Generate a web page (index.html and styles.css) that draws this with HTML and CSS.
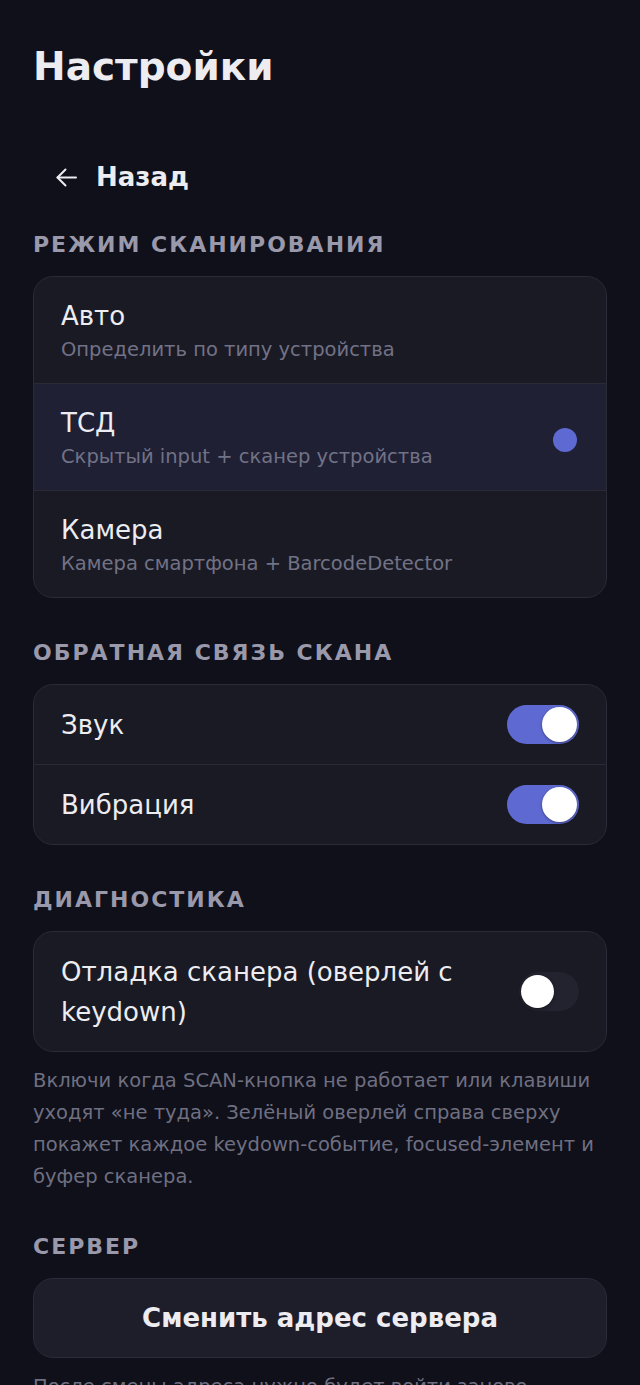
FILE: index.html
```html
<!DOCTYPE html>
<html lang="ru">

<head>
    <meta charset="UTF-8">
    <meta name="viewport" content="width=device-width, initial-scale=1.0">
    <title>Настройки</title>
    <link rel="stylesheet" href="styles.css">
</head>

<body>

    <div class="page">
        <h1>Настройки</h1>

        <button class="back-btn">
            <svg width="21" height="19" viewBox="0 0 21 19" fill="none" stroke="currentColor" stroke-width="2" stroke-linecap="round" stroke-linejoin="round">
                <path d="M20 9.5H1.5" />
                <path d="M9.5 1.5L1.5 9.5L9.5 17.5" />
            </svg>
            <span>Назад</span>
        </button>

        <div class="section-title">Режим сканирования</div>
        <div class="card">
            <div class="option">
                <div class="option-text">
                    <div class="option-name">Авто</div>
                    <div class="option-desc">Определить по типу устройства</div>
                </div>
            </div>
            <div class="option selected">
                <div class="option-text">
                    <div class="option-name">ТСД</div>
                    <div class="option-desc">Скрытый input + сканер устройства</div>
                </div>
                <span class="dot"></span>
            </div>
            <div class="option">
                <div class="option-text">
                    <div class="option-name">Камера</div>
                    <div class="option-desc">Камера смартфона + BarcodeDetector</div>
                </div>
            </div>
        </div>

        <div class="section-title">Обратная связь скана</div>
        <div class="card">
            <div class="row">
                <span class="row-label">Звук</span>
                <span class="toggle on"></span>
            </div>
            <div class="row">
                <span class="row-label">Вибрация</span>
                <span class="toggle on"></span>
            </div>
        </div>

        <div class="section-title">Диагностика</div>
        <div class="card card-tight">
            <div class="row">
                <span class="row-label">Отладка сканера (оверлей с keydown)</span>
                <span class="toggle"></span>
            </div>
        </div>
        <p class="hint">Включи когда SCAN-кнопка не работает или клавиши уходят «не туда». Зелёный оверлей справа сверху покажет каждое keydown-событие, focused-элемент и буфер сканера.</p>

        <div class="section-title">Сервер</div>
        <button class="wide-btn">Сменить адрес сервера</button>
        <p class="hint">После смены адреса нужно будет войти заново.</p>
    </div>

</body>

</html>
```

FILE: styles.css
```css
body {
    margin: 0;
    background-color: #0f1019;
    color: #ececf1;
    font-family: "DejaVu Sans", sans-serif;
}

.page {
    padding: 43px 33px 40px;
}

h1 {
    margin: 0;
    font-size: 39px;
    line-height: 48px;
    font-weight: bold;
}

.back-btn {
    display: flex;
    align-items: center;
    gap: 19px;
    margin: 59px 0 27px;
    padding: 12px 23px;
    background: none;
    border: none;
    color: #ececf1;
    font-family: inherit;
    font-size: 26px;
    line-height: 31px;
    font-weight: bold;
    cursor: pointer;
}

.section-title {
    margin-bottom: 18px;
    font-size: 22px;
    line-height: 26px;
    font-weight: bold;
    letter-spacing: 2px;
    text-transform: uppercase;
    color: #9999ab;
}

.card {
    margin-bottom: 42px;
    background-color: #1a1a24;
    border: 1px solid #2a2a38;
    border-radius: 20px;
    overflow: hidden;
}

.card-tight {
    margin-bottom: 13px;
}

.option {
    display: flex;
    align-items: center;
    padding: 24px 29px 22px 27px;
}

.option + .option {
    border-top: 1px solid #2a2a37;
}

.option.selected {
    background-color: #1f2034;
}

.option-text {
    flex: 1;
}

.option-name {
    font-size: 26px;
    line-height: 30px;
}

.option-desc {
    margin-top: 8px;
    font-size: 19.5px;
    line-height: 22px;
    color: #727286;
}

.dot {
    width: 24px;
    height: 24px;
    margin-top: 4px;
    border-radius: 50%;
    background-color: #5e6ad2;
}

.row {
    display: flex;
    align-items: center;
    gap: 16px;
    padding: 19.5px 27px;
}

.row + .row {
    border-top: 1px solid #2a2a37;
}

.row-label {
    flex: 1 1 auto;
    font-size: 26px;
    line-height: 40px;
}

.toggle {
    position: relative;
    width: 72px;
    height: 39px;
    border-radius: 20px;
    background-color: #23232f;
}

.toggle::after {
    content: "";
    position: absolute;
    top: 3px;
    left: 2px;
    width: 33px;
    height: 33px;
    border-radius: 50%;
    background-color: #fff;
    box-shadow: 0 1px 3px rgba(0, 0, 0, 0.4);
}

.toggle.on {
    background-color: #5e6ad2;
}

.toggle.on::after {
    top: 2px;
    left: auto;
    right: 2px;
    width: 35px;
    height: 35px;
}

.hint {
    margin: 13px 0 41px;
    font-size: 19.5px;
    line-height: 32px;
    color: #6f6f82;
}

.wide-btn {
    display: block;
    width: 100%;
    height: 80px;
    background-color: #1e1e2a;
    border: 1px solid #2a2a38;
    border-radius: 20px;
    color: #ececf1;
    font-family: inherit;
    font-size: 26px;
    font-weight: bold;
    cursor: pointer;
}
```
